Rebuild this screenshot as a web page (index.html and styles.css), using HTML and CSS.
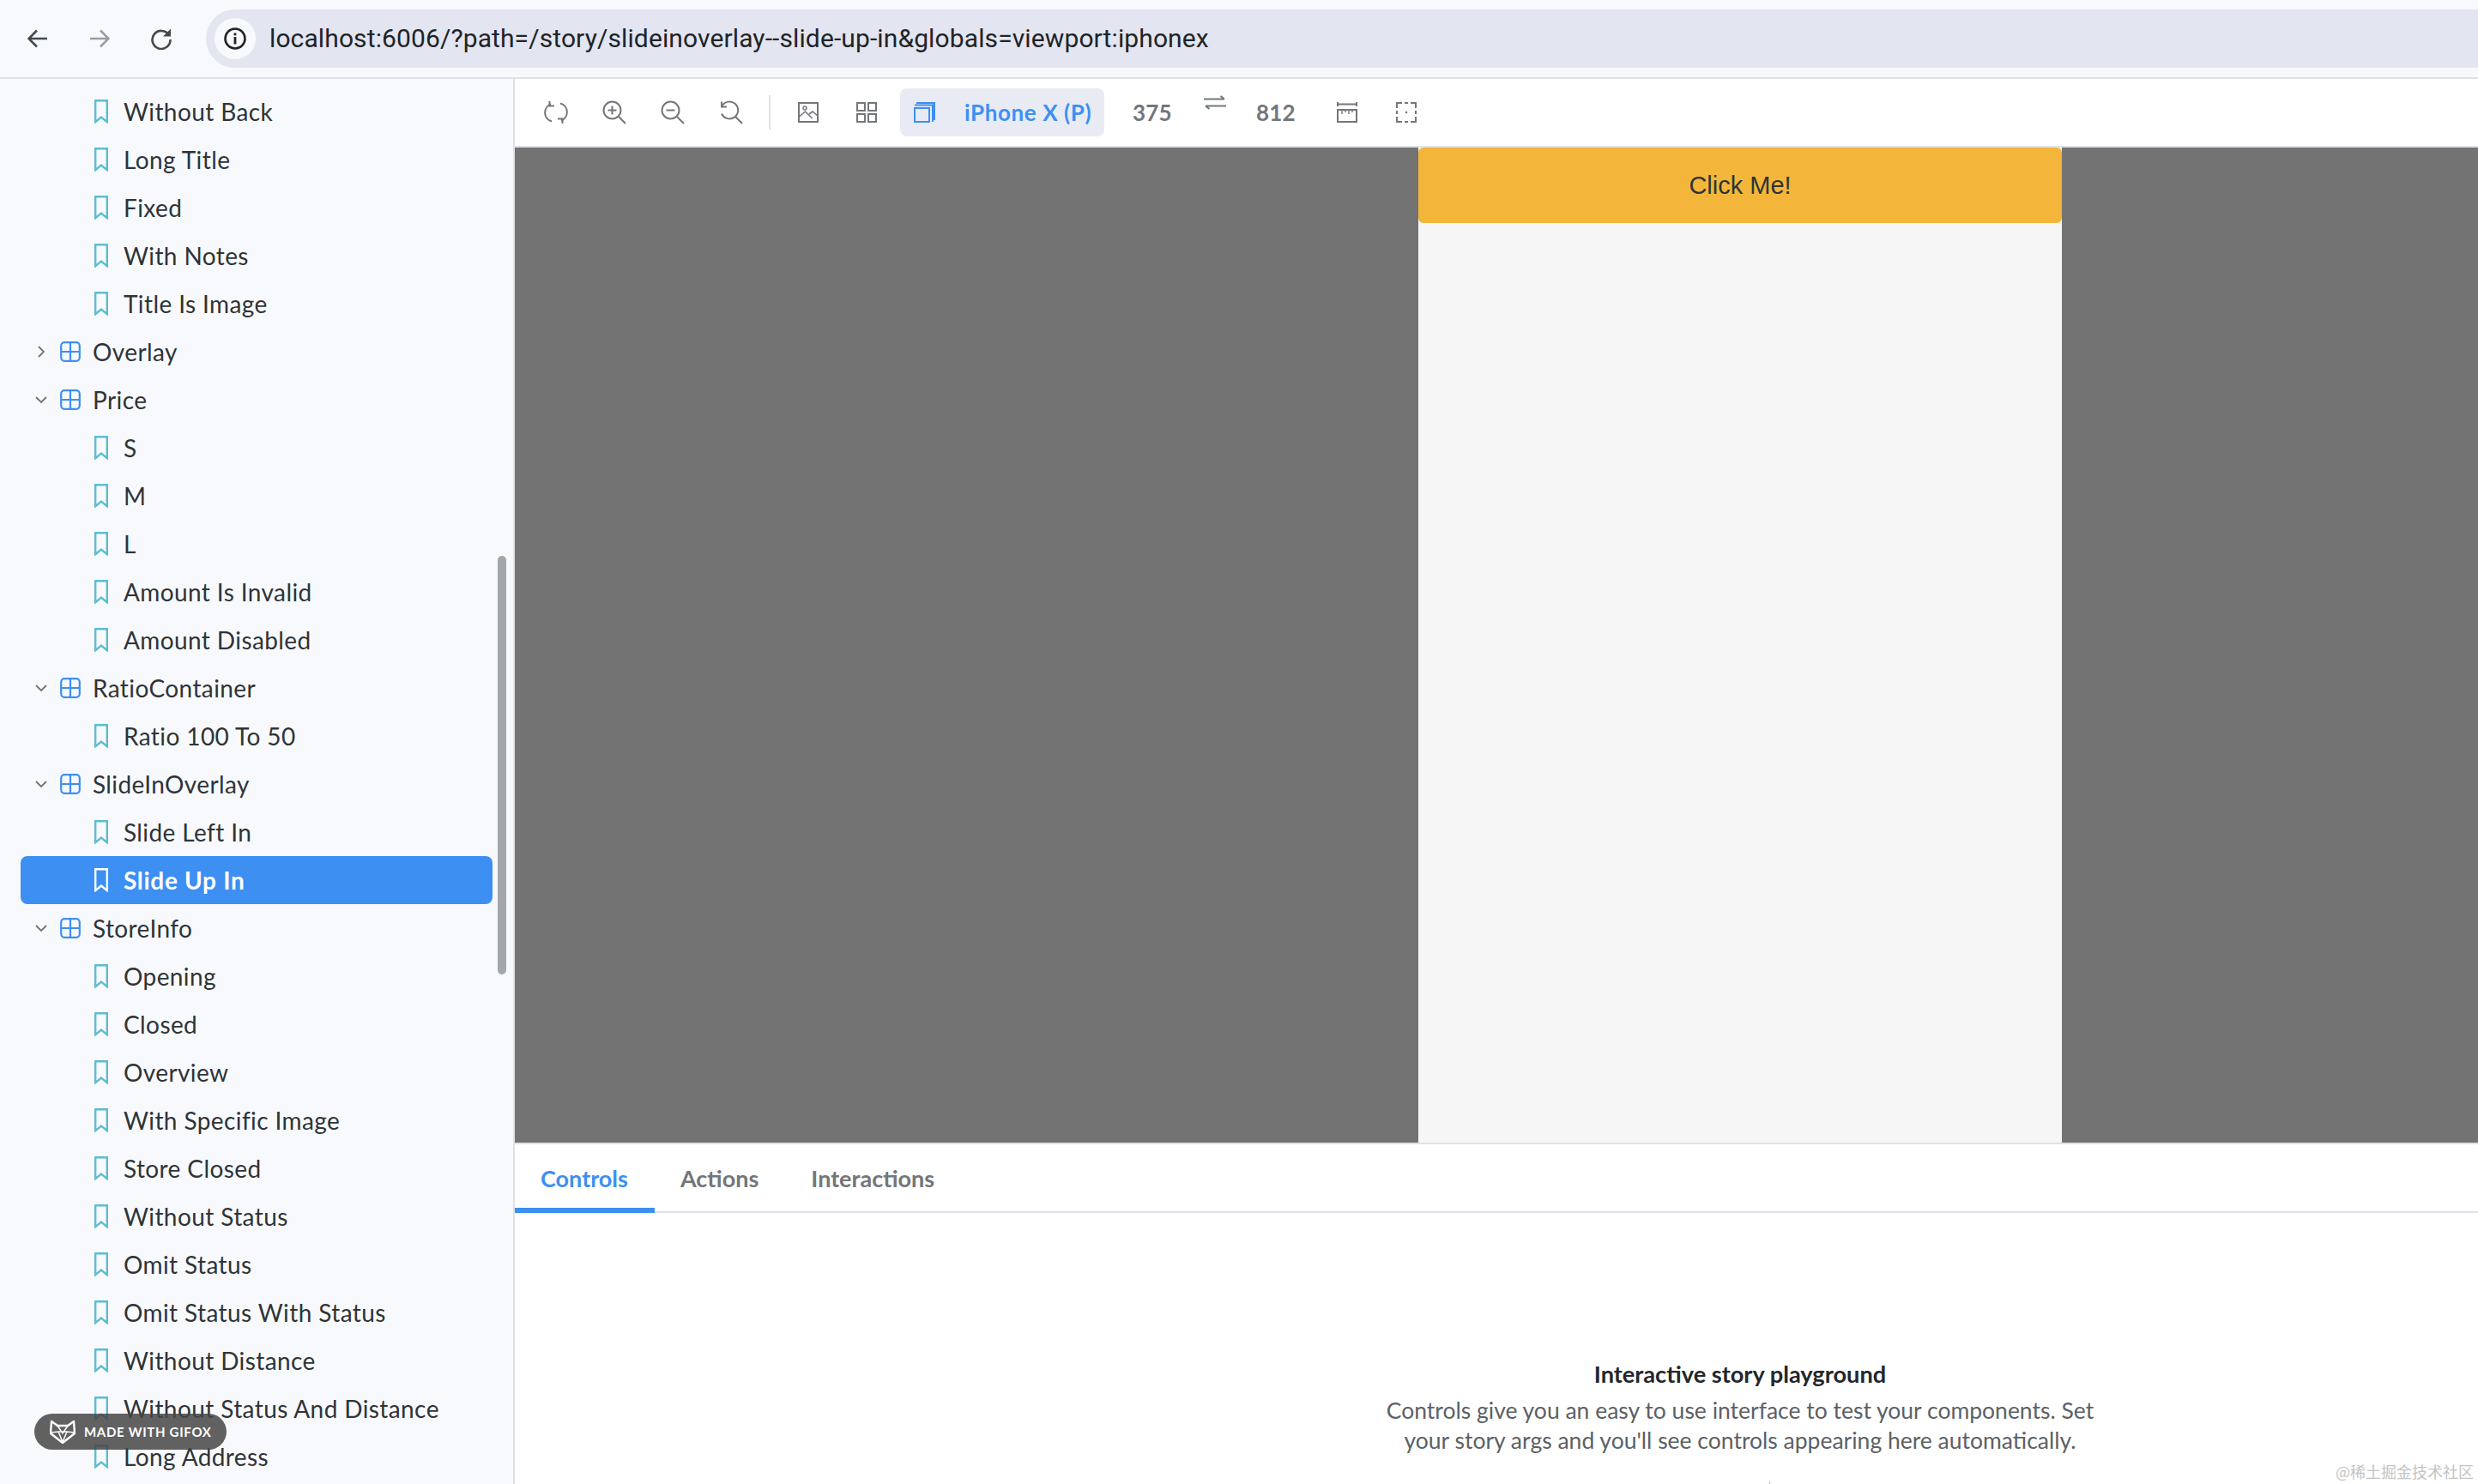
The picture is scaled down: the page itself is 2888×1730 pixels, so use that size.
FILE: index.html
```html
<!DOCTYPE html>
<html lang="en">
<head>
    <meta charset="UTF-8">
    <title>Slide Up In - SlideInOverlay</title>
    <link rel="stylesheet" href="styles.css">
</head>
<body>
    <svg class="defs" width="0" height="0">
        <symbol id="bookmark" viewBox="0 0 16 28"><path d="M1.2 1.2h13.6v25l-6.800-5.600-6.800 5.600z" fill="none" stroke="currentColor" stroke-width="2.400"/></symbol>
        <symbol id="component" viewBox="0 0 24 24"><rect x="1.200" y="1.200" width="21.600" height="21.600" rx="4" fill="none" stroke="currentColor" stroke-width="2.200"/><path d="M12 1v22M1 12h22" stroke="currentColor" stroke-width="2.200"/></symbol>
        <symbol id="down" viewBox="0 0 14 8"><path d="M1 1l6 6 6-6" fill="none" stroke="currentColor" stroke-width="1.800"/></symbol>
        <symbol id="right" viewBox="0 0 8 14"><path d="M1 1l6 6-6 6" fill="none" stroke="currentColor" stroke-width="1.800"/></symbol>
    </svg>

    <header class="browser-bar">
        <div class="nav-btn">
            <svg width="24" height="22" viewBox="0 0 24 22"><path d="M23 11H2M11 1.500L1.500 11l9.500 9.500" fill="none" stroke="#444a50" stroke-width="2.600"/></svg>
        </div>
        <div class="nav-btn">
            <svg width="24" height="22" viewBox="0 0 24 22"><path d="M1 11h21M13 1.500l9.500 9.500-9.500 9.500" fill="none" stroke="#9a9ea4" stroke-width="2.600"/></svg>
        </div>
        <div class="nav-btn">
            <svg width="26" height="26" viewBox="0 0 26 26"><path d="M22 9a10.500 10.500 0 1 0 1.500 5" fill="none" stroke="#444a50" stroke-width="2.600"/><path d="M24 1.500v9h-9z" fill="#444a50"/></svg>
        </div>
        <div class="address">
            <span class="site-info">
                <svg width="26" height="26" viewBox="0 0 26 26"><circle cx="13" cy="13" r="11.500" fill="none" stroke="#202428" stroke-width="2.600"/><rect x="11.600" y="11" width="2.800" height="8.500" fill="#202428"/><rect x="11.600" y="6.500" width="2.800" height="2.800" fill="#202428"/></svg>
            </span>
            <span class="url">localhost:6006/?path=/story/slideinoverlay--slide-up-in&amp;globals=viewport:iphonex</span>
        </div>
    </header>

    <div class="main">
        <aside class="sidebar">
            <div class="row leaf"><svg class="ic-book"><use href="#bookmark"/></svg>Without Back</div>
            <div class="row leaf"><svg class="ic-book"><use href="#bookmark"/></svg>Long Title</div>
            <div class="row leaf"><svg class="ic-book"><use href="#bookmark"/></svg>Fixed</div>
            <div class="row leaf"><svg class="ic-book"><use href="#bookmark"/></svg>With Notes</div>
            <div class="row leaf"><svg class="ic-book"><use href="#bookmark"/></svg>Title Is Image</div>
            <div class="row group"><svg class="ic-right"><use href="#right"/></svg><svg class="ic-comp"><use href="#component"/></svg>Overlay</div>
            <div class="row group"><svg class="ic-down"><use href="#down"/></svg><svg class="ic-comp"><use href="#component"/></svg>Price</div>
            <div class="row leaf"><svg class="ic-book"><use href="#bookmark"/></svg>S</div>
            <div class="row leaf"><svg class="ic-book"><use href="#bookmark"/></svg>M</div>
            <div class="row leaf"><svg class="ic-book"><use href="#bookmark"/></svg>L</div>
            <div class="row leaf"><svg class="ic-book"><use href="#bookmark"/></svg>Amount Is Invalid</div>
            <div class="row leaf"><svg class="ic-book"><use href="#bookmark"/></svg>Amount Disabled</div>
            <div class="row group"><svg class="ic-down"><use href="#down"/></svg><svg class="ic-comp"><use href="#component"/></svg>RatioContainer</div>
            <div class="row leaf"><svg class="ic-book"><use href="#bookmark"/></svg>Ratio 100 To 50</div>
            <div class="row group"><svg class="ic-down"><use href="#down"/></svg><svg class="ic-comp"><use href="#component"/></svg>SlideInOverlay</div>
            <div class="row leaf"><svg class="ic-book"><use href="#bookmark"/></svg>Slide Left In</div>
            <div class="row leaf selected"><svg class="ic-book"><use href="#bookmark"/></svg>Slide Up In</div>
            <div class="row group"><svg class="ic-down"><use href="#down"/></svg><svg class="ic-comp"><use href="#component"/></svg>StoreInfo</div>
            <div class="row leaf"><svg class="ic-book"><use href="#bookmark"/></svg>Opening</div>
            <div class="row leaf"><svg class="ic-book"><use href="#bookmark"/></svg>Closed</div>
            <div class="row leaf"><svg class="ic-book"><use href="#bookmark"/></svg>Overview</div>
            <div class="row leaf"><svg class="ic-book"><use href="#bookmark"/></svg>With Specific Image</div>
            <div class="row leaf"><svg class="ic-book"><use href="#bookmark"/></svg>Store Closed</div>
            <div class="row leaf"><svg class="ic-book"><use href="#bookmark"/></svg>Without Status</div>
            <div class="row leaf"><svg class="ic-book"><use href="#bookmark"/></svg>Omit Status</div>
            <div class="row leaf"><svg class="ic-book"><use href="#bookmark"/></svg>Omit Status With Status</div>
            <div class="row leaf"><svg class="ic-book"><use href="#bookmark"/></svg>Without Distance</div>
            <div class="row leaf"><svg class="ic-book"><use href="#bookmark"/></svg>Without Status And Distance</div>
            <div class="row leaf"><svg class="ic-book"><use href="#bookmark"/></svg>Long Address</div>
            <div class="scroll-thumb"></div>
        </aside>

        <div class="content">
            <div class="toolbar">
                <span class="tool">
                    <svg width="28" height="28" viewBox="0 0 28 28"><path d="M8 4.500A10.500 10.500 0 0 0 9 24.500M20 23.500A10.500 10.500 0 0 0 19 3.500" fill="none" stroke="#73767a" stroke-width="2"/><path d="M6.500 1v5.500H12M21.500 27v-5.500H16" fill="none" stroke="#73767a" stroke-width="2"/></svg>
                </span>
                <span class="tool">
                    <svg width="28" height="28" viewBox="0 0 28 28"><circle cx="11.500" cy="11.500" r="10" fill="none" stroke="#73767a" stroke-width="2"/><path d="M19 19l8 8M6.500 11.500h10M11.500 6.500v10" fill="none" stroke="#73767a" stroke-width="2"/></svg>
                </span>
                <span class="tool">
                    <svg width="28" height="28" viewBox="0 0 28 28"><circle cx="11.500" cy="11.500" r="10" fill="none" stroke="#73767a" stroke-width="2"/><path d="M19 19l8 8M6.500 11.500h10" fill="none" stroke="#73767a" stroke-width="2"/></svg>
                </span>
                <span class="tool">
                    <svg width="28" height="28" viewBox="0 0 28 28"><path d="M3.500 6.500A10 10 0 1 1 3 15.500M19 19l8 8" fill="none" stroke="#73767a" stroke-width="2"/><path d="M3 1.500v6h6" fill="none" stroke="#73767a" stroke-width="2"/></svg>
                </span>
                <span class="divider"></span>
                <span class="tool">
                    <svg width="24" height="24" viewBox="0 0 24 24"><rect x="1" y="1" width="22" height="22" fill="none" stroke="#73767a" stroke-width="2"/><circle cx="8" cy="7" r="2" fill="none" stroke="#73767a" stroke-width="1.500"/><path d="M1.500 17l7-6 8 8M13 14l4-3 6 5" fill="none" stroke="#73767a" stroke-width="1.600"/></svg>
                </span>
                <span class="tool">
                    <svg width="24" height="24" viewBox="0 0 24 24"><path d="M1 1h9v9H1zM14 1h9v9h-9zM1 14h9v9H1zM14 14h9v9h-9z" fill="none" stroke="#73767a" stroke-width="2"/></svg>
                </span>
                <span class="device">
                    <svg width="25" height="24" viewBox="0 0 25 24"><path d="M1 7h17v16H1zM1 3.500h21v19.500M3 1h21v20" fill="none" stroke="#3d8ff2" stroke-width="2"/></svg>
                    iPhone X (P)
                </span>
                <span class="dim">375</span>
                <span class="swap">
                    <svg width="26" height="17" viewBox="0 0 26 17"><path d="M0 4.500h24M19.500 1l4.500 3.500M26 12.500H2M6.500 16L2 12.500" fill="none" stroke="#73767a" stroke-width="2"/></svg>
                </span>
                <span class="dim">812</span>
                <span class="tool measure">
                    <svg width="24" height="24" viewBox="0 0 24 24"><path d="M1 0v5M23 0v5M1 2.500h22M1 9h22v14H1z" fill="none" stroke="#73767a" stroke-width="2"/><path d="M6 9v5M10 9v3M14 9v5M18 9v3" fill="none" stroke="#73767a" stroke-width="1.400"/></svg>
                </span>
                <span class="tool outline">
                    <svg width="24" height="24" viewBox="0 0 24 24"><path d="M1 7V1h6M17 1h6v6M23 17v6h-6M7 23H1v-6" fill="none" stroke="#73767a" stroke-width="2"/><path d="M10 1h4M10 23h4M1 10v4M23 10v4" stroke="#73767a" stroke-width="2"/><circle cx="12" cy="12" r="1.300" fill="#73767a"/></svg>
                </span>
            </div>

            <div class="preview">
                <div class="phone">
                    <button class="cta">Click Me!</button>
                </div>
            </div>

            <div class="panel">
                <nav class="tabs">
                    <span class="tab active">Controls</span>
                    <span class="tab">Actions</span>
                    <span class="tab">Interactions</span>
                </nav>
                <div class="empty">
                    <div class="empty-title">Interactive story playground</div>
                    <p class="empty-text">Controls give you an easy to use interface to test your components. Set your story args and you'll see controls appearing here automatically.</p>
                </div>
            </div>
        </div>
    </div>

    <div class="gifox">
        <svg width="30" height="28" viewBox="0 0 30 28"><path d="M2 2l7 5h12l7-5 1 14-14 11L1 16z" fill="none" stroke="#fff" stroke-width="2.400" stroke-linejoin="round"/><path d="M9 7l6 9 6-9M1.500 15l8.500-1 5 12 5-12 8.500 1M10 14h10" fill="none" stroke="#fff" stroke-width="1.500"/></svg>
        <span>MADE WITH GIFOX</span>
    </div>
    <div class="watermark">@稀土掘金技术社区</div>
    <div class="clip-tick"></div>
</body>
</html>
```

FILE: styles.css
```css
* {
    box-sizing: border-box;
}
html, body {
    margin: 0;
    height: 1730px;
    overflow: hidden;
}
body {
    position: relative;
    font-family: Lato, sans-serif;
    color: #2e3438;
    background: #fff;
}
.defs {
    position: absolute;
}

/* browser chrome */
.browser-bar {
    display: flex;
    align-items: center;
    height: 92px;
    padding-left: 8px;
    background: #f8f9fd;
    border-bottom: 2px solid #dfe2e9;
}
.nav-btn {
    display: flex;
    justify-content: center;
    align-items: center;
    width: 72px;
}
.address {
    flex: 1;
    display: flex;
    align-items: center;
    height: 68px;
    margin-left: 16px;
    padding-left: 10px;
    background: #e3e5f0;
    border-radius: 34px 0 0 34px;
}
.site-info {
    display: flex;
    justify-content: center;
    align-items: center;
    width: 48px;
    height: 48px;
    background: #f8f9fd;
    border-radius: 50%;
}
.url {
    margin: 0 0 2px 16px;
    font-family: Roboto, sans-serif;
    font-size: 30px;
    letter-spacing: 0.11px;
    font-variant-ligatures: none;
    color: #202428;
}

.main {
    display: flex;
    height: 1638px;
}

/* sidebar */
.sidebar {
    position: relative;
    flex: none;
    width: 600px;
    padding: 10px 24px 0;
    overflow: hidden;
    background: #f8f9fc;
    border-right: 2px solid #dfe2e9;
}
.row {
    display: flex;
    align-items: center;
    height: 56px;
    font-size: 28px;
    letter-spacing: 0.4px;
    white-space: nowrap;
}
.leaf {
    padding-left: 86px;
}
.group {
    padding-left: 17px;
}
.selected {
    font-weight: 700;
    letter-spacing: 0.7px;
    color: #fff;
    background: #3d8ff2;
    border-radius: 8px;
}
.ic-book {
    flex: none;
    width: 16px;
    height: 28px;
    margin-right: 18px;
    color: #5bbdd2;
}
.selected .ic-book {
    color: #fff;
}
.ic-comp {
    flex: none;
    width: 24px;
    height: 24px;
    margin-right: 14px;
    color: #3d8ff2;
}
.ic-down {
    flex: none;
    width: 14px;
    height: 8px;
    margin-right: 15px;
    color: #6f7479;
}
.ic-right {
    flex: none;
    width: 8px;
    height: 14px;
    margin: 0 18px 0 3px;
    color: #6f7479;
}
.scroll-thumb {
    position: absolute;
    top: 556px;
    left: 580px;
    width: 10px;
    height: 488px;
    background: #a3a7ab;
    border-radius: 5px;
}

/* storybook main column, wider than the window */
.content {
    flex: none;
    width: 2856px;
    display: flex;
    flex-direction: column;
}
.toolbar {
    display: flex;
    align-items: center;
    height: 80px;
    padding-left: 14px;
    background: #fff;
    border-bottom: 2px solid #dfe2e9;
    color: #73767a;
    font-size: 26px;
    font-weight: 700;
}
.tool {
    display: flex;
    justify-content: center;
    align-items: center;
    width: 68px;
}
.divider {
    width: 2px;
    height: 40px;
    margin: 0 10px;
    background: #dfe2e9;
}
.device {
    display: flex;
    align-items: center;
    gap: 34px;
    width: 238px;
    height: 56px;
    margin-left: 5px;
    padding-left: 16px;
    letter-spacing: 0.6px;
    color: #3d8ff2;
    background: #e9ebf4;
    border-radius: 8px;
    white-space: nowrap;
}
.dim {
    width: 46px;
    margin-left: 33px;
    letter-spacing: 0.2px;
}
.swap {
    display: flex;
    margin: 0 2px 24px 37px;
}
.measure {
    margin-left: 26px;
}
.outline {
    margin-left: 1px;
}

.preview {
    display: flex;
    justify-content: center;
    height: 1160px;
    background: #737373;
}
.phone {
    width: 750px;
    background: #f6f6f6;
}
.cta {
    display: block;
    width: 100%;
    height: 88px;
    padding: 0;
    border: none;
    border-radius: 6px;
    background: #f4b63a;
    color: #2e3438;
    font-family: "Liberation Sans", Arial, sans-serif;
    font-size: 29px;
}

/* addons panel */
.panel {
    flex: 1;
    border-top: 2px solid #dfe2e9;
    background: #fff;
}
.tabs {
    display: flex;
    height: 80px;
    box-shadow: inset 0 -2px 0 #dfe2e9;
}
.tab {
    display: flex;
    align-items: center;
    padding: 5px 31px 0 30px;
    font-size: 27px;
    font-weight: 700;
    color: #73767a;
    border-bottom: 6px solid transparent;
}
.tab.active {
    color: #3d8ff2;
    border-bottom-color: #3d8ff2;
}
.empty {
    padding-top: 170px;
    text-align: center;
    line-height: 35px;
}
.empty-title {
    font-size: 27.200px;
    font-weight: 700;
    color: #23272b;
}
.empty-text {
    width: 860px;
    margin: 8px auto 0;
    font-size: 26.500px;
    color: #5c6166;
}

/* overlays from the recording tool and the image host */
.gifox {
    position: absolute;
    left: 40px;
    top: 1648px;
    display: flex;
    align-items: center;
    gap: 10px;
    width: 224px;
    height: 42px;
    padding-left: 18px;
    color: #fff;
    background: rgba(70, 70, 70, 0.85);
    border-radius: 21px;
    font-size: 15px;
    font-weight: 700;
    letter-spacing: 0.7px;
}
.watermark {
    position: absolute;
    right: 5px;
    top: 1702px;
    font-family: "Noto Sans CJK SC", sans-serif;
    font-size: 18px;
    color: #c4c4c4;
}
.clip-tick {
    position: absolute;
    left: 2062px;
    top: 1727px;
    width: 1px;
    height: 3px;
    background: #b9bcc0;
}
```
